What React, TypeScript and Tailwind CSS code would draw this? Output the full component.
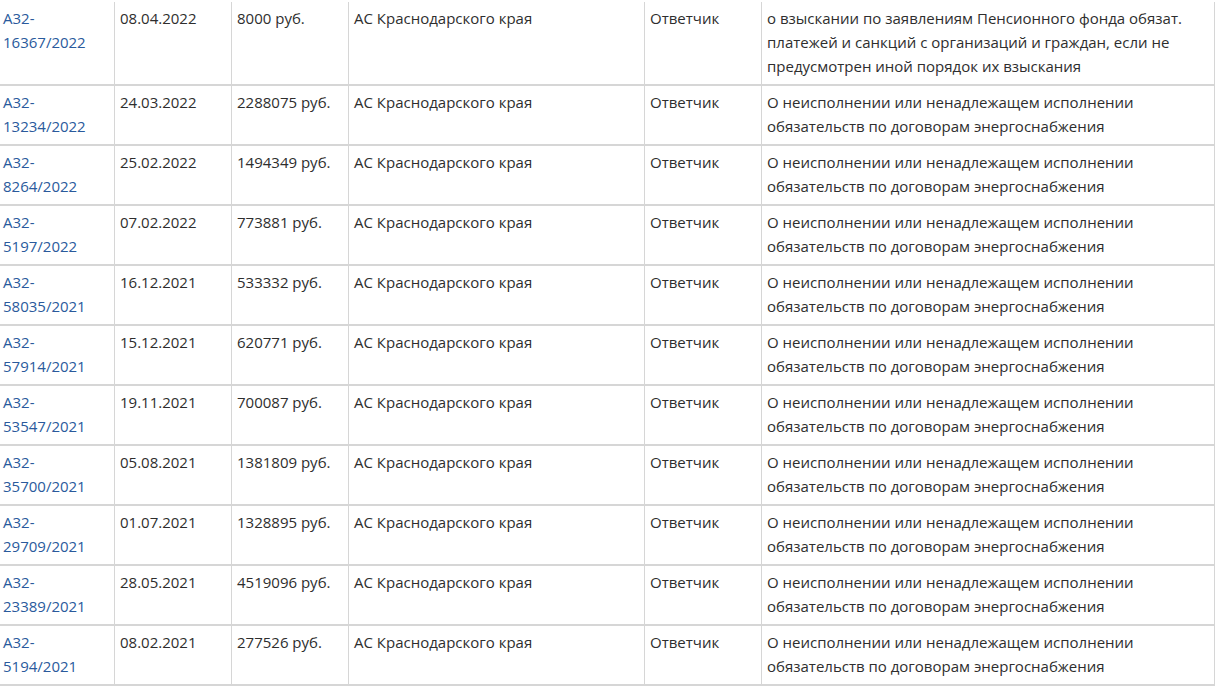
import React from 'react';

interface CaseRow {
  num: string;
  date: string;
  sum: string;
  court: string;
  role: string;
  subject: string;
}

const energy = 'О неисполнении или ненадлежащем исполнении обязательств по договорам энергоснабжения';

const rows: CaseRow[] = [
  { num: 'А32-16367/2022', date: '08.04.2022', sum: '8000 руб.', court: 'АС Краснодарского края', role: 'Ответчик', subject: 'о взыскании по заявлениям Пенсионного фонда обязат. платежей и санкций с организаций и граждан, если не предусмотрен иной порядок их взыскания' },
  { num: 'А32-13234/2022', date: '24.03.2022', sum: '2288075 руб.', court: 'АС Краснодарского края', role: 'Ответчик', subject: energy },
  { num: 'А32-8264/2022', date: '25.02.2022', sum: '1494349 руб.', court: 'АС Краснодарского края', role: 'Ответчик', subject: energy },
  { num: 'А32-5197/2022', date: '07.02.2022', sum: '773881 руб.', court: 'АС Краснодарского края', role: 'Ответчик', subject: energy },
  { num: 'А32-58035/2021', date: '16.12.2021', sum: '533332 руб.', court: 'АС Краснодарского края', role: 'Ответчик', subject: energy },
  { num: 'А32-57914/2021', date: '15.12.2021', sum: '620771 руб.', court: 'АС Краснодарского края', role: 'Ответчик', subject: energy },
  { num: 'А32-53547/2021', date: '19.11.2021', sum: '700087 руб.', court: 'АС Краснодарского края', role: 'Ответчик', subject: energy },
  { num: 'А32-35700/2021', date: '05.08.2021', sum: '1381809 руб.', court: 'АС Краснодарского края', role: 'Ответчик', subject: energy },
  { num: 'А32-29709/2021', date: '01.07.2021', sum: '1328895 руб.', court: 'АС Краснодарского края', role: 'Ответчик', subject: energy },
  { num: 'А32-23389/2021', date: '28.05.2021', sum: '4519096 руб.', court: 'АС Краснодарского края', role: 'Ответчик', subject: energy },
  { num: 'А32-5194/2021', date: '08.02.2021', sum: '277526 руб.', court: 'АС Краснодарского края', role: 'Ответчик', subject: energy },
];

const cell = 'border-x border-b-2 border-[#d6d6d6] align-top px-[5px] pt-[4px] pb-[6px]';

const App: React.FC = () => {
  return (
    <div className="min-h-screen bg-white pt-[2px]" style={{ fontFamily: '"Open Sans", "Noto Sans", sans-serif' }}>
      <table className="border-collapse table-fixed w-[1215px] -ml-[1px] text-[15px] leading-[24px] text-[#2e2e2e]">
        <colgroup>
          <col className="w-[115px]" />
          <col className="w-[117px]" />
          <col className="w-[117px]" />
          <col className="w-[296px]" />
          <col className="w-[117px]" />
          <col className="w-[453px]" />
        </colgroup>
        <tbody>
          {rows.map((r) => (
            <tr key={r.num}>
              <td className={`${cell} !pl-[3px]`}>
                <a href="#" className="text-[#2a5a9c]">
                  {r.num.split('-')[0]}-
                  <br />
                  {r.num.split('-')[1]}
                </a>
              </td>
              <td className={cell}>{r.date}</td>
              <td className={cell}>{r.sum}</td>
              <td className={cell}>{r.court}</td>
              <td className={cell}>{r.role}</td>
              <td className={cell}>{r.subject}</td>
            </tr>
          ))}
        </tbody>
      </table>
    </div>
  );
};

export default App;
